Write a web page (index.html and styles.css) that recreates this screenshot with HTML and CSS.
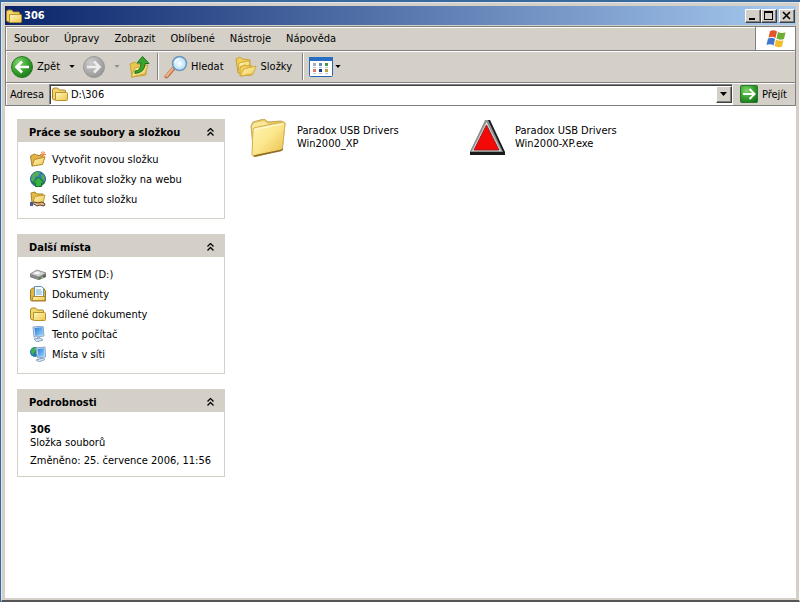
FILE: index.html
```html
<!DOCTYPE html>
<html lang="cs">
<head>
<meta charset="utf-8">
<title>306</title>
<link rel="stylesheet" href="styles.css">
</head>
<body>
<svg class="defs" aria-hidden="true">
  <defs>
    <linearGradient id="yellow" x1="0" y1="0" x2="1" y2="1"><stop offset="0" stop-color="#fff8c0"/><stop offset="1" stop-color="#edc64b"/></linearGradient>
    <radialGradient id="green" cx=".35" cy=".3" r=".8"><stop offset="0" stop-color="#83d86d"/><stop offset=".55" stop-color="#36a02e"/><stop offset="1" stop-color="#17731b"/></radialGradient>
    <radialGradient id="gray" cx=".35" cy=".3" r=".8"><stop offset="0" stop-color="#ccc"/><stop offset="1" stop-color="#929292"/></radialGradient>
    <radialGradient id="lens"><stop offset="0" stop-color="#fff"/><stop offset="1" stop-color="#a8dcf4"/></radialGradient>
    <linearGradient id="screen" x1="0" y1="0" x2="1" y2="1"><stop offset="0" stop-color="#2b78d8"/><stop offset="1" stop-color="#9ad8ff"/></linearGradient>
    <linearGradient id="bigfolder" x1="0" y1="0" x2="1" y2="1"><stop offset="0" stop-color="#fff6b4"/><stop offset=".5" stop-color="#fbe68c"/><stop offset="1" stop-color="#e9bc45"/></linearGradient>
    <symbol id="folder" viewBox="0 0 16 16">
      <path d="M.5 4q0-2 2-2h3l2 2h5q1 0 1 1v9H3q-2.500 0-2.500-2z" fill="#f2d56b" stroke="#a98420"/>
      <path d="M3.500 6.500h11q1 0 1 1v6q0 1-1 1h-10q-1 0-1-1z" fill="url(#yellow)" stroke="#b8912c"/>
    </symbol>
    <symbol id="chevrons" viewBox="0 0 7 8">
      <path d="M.5 3.500l3-3 3 3M.5 7.500l3-3 3 3" fill="none" stroke="#000" stroke-width="1.300"/>
    </symbol>
    <symbol id="down" viewBox="0 0 7 4"><path d="M0 0h7L3.500 4z" fill="currentColor"/></symbol>
  </defs>
</svg>
<div class="window">
  <header class="titlebar">
    <svg class="i16"><use href="#folder"/></svg>
    <h1>306</h1>
    <div class="caption">
      <button class="capbtn" aria-label="Minimalizovat"><svg viewBox="0 0 12 10"><path d="M2 7h6v2H2z"/></svg></button>
      <button class="capbtn" aria-label="Maximalizovat"><svg viewBox="0 0 12 10"><path d="M1 0h9v9H1zM2 2v6h7V2z" fill-rule="evenodd"/></svg></button>
      <button class="capbtn close" aria-label="Zavřít"><svg viewBox="0 0 12 10"><path d="M2 1l7 7M9 1L2 8" stroke="#000" stroke-width="1.600"/></svg></button>
    </div>
  </header>
  <div class="menurow">
    <nav class="menu">
      <button>Soubor</button><button>Úpravy</button><button>Zobrazit</button><button>Oblíbené</button><button>Nástroje</button><button>Nápověda</button>
    </nav>
    <div class="brand">
      <svg viewBox="0 0 20 18">
        <path d="M4 1q4-1.500 7 .5L9.500 8Q6 6 2.500 7.500z" fill="#e2562a"/>
        <path d="M12 2q3 1.500 7.500.5L18 9q-4 1.500-7.500-.5z" fill="#6fae35"/>
        <path d="M2 8.500q4-1.500 7 .5l-1.500 6.500q-3-2-7-.5z" fill="#3f76cf"/>
        <path d="M10 9.500q4 2 7.500.7L16 16.500q-4 1.500-7.500-.5z" fill="#f4bd2b"/>
      </svg>
    </div>
  </div>
  <div class="toolbar">
    <button class="tool back"><svg class="i22" viewBox="0 0 22 22"><circle cx="11" cy="11" r="10.500" fill="url(#green)" stroke="#2b7a2a"/><path d="M18 11H6M11 5.500L5.500 11l5.500 5.500" fill="none" stroke="#fff" stroke-width="2.600"/></svg><span>Zpět</span></button>
    <button class="drop" aria-label="Historie zpět"><svg class="arrow"><use href="#down"/></svg></button>
    <button class="tool fwd" aria-label="Vpřed" disabled><svg class="i22" viewBox="0 0 22 22"><circle cx="11" cy="11" r="10.500" fill="url(#gray)" stroke="#999"/><path d="M4 11h12M11 5.500l5.500 5.500-5.500 5.500" fill="none" stroke="#eee" stroke-width="2.600"/></svg></button>
    <button class="drop" aria-label="Historie vpřed" disabled><svg class="arrow"><use href="#down"/></svg></button>
    <button class="tool up" aria-label="Nahoru"><svg class="i22" viewBox="0 0 22 22"><path d="M1 8l5-2 2 2 9 1v10L3 21z" fill="#e8c650" stroke="#c9a437"/><path d="M2 21l4-9 13-3-3 9z" fill="url(#yellow)" stroke="#c9a437"/><path d="M6 15q6 0 6-8H8L13.500.5 20 7.500h-4q0 9-10 10z" fill="#39a62b" stroke="#1d731a"/></svg></button>
    <span class="sep"></span>
    <button class="tool search"><svg class="i24" viewBox="0 0 24 24"><path d="M9 14l-6.500 7.500" stroke="#b96c3c" stroke-width="4" stroke-linecap="round"/><path d="M8.500 14l-6 7" stroke="#eab088" stroke-width="2.500" stroke-linecap="round"/><circle cx="15.500" cy="8.500" r="7" fill="url(#lens)" stroke="#7195bd" stroke-width="1.500"/><path d="M11 8q1-4 5-4" fill="none" stroke="#fff" stroke-width="1.500"/></svg><span>Hledat</span></button>
    <button class="tool folders"><svg class="i22" viewBox="0 0 22 22"><path d="M1 3l4-2 2 2 8 1v9L3 17z" fill="#f1cf5a" stroke="#caa032"/><path d="M4 7l9-2 2 1-2 9-10 2z" fill="url(#yellow)" stroke="#d2ab3c"/><path d="M5 11l5-2 2 1h5v9l-12 1z" fill="#f1cf5a" stroke="#caa032"/><path d="M5 20l4-7 12-3-3 8z" fill="url(#yellow)" stroke="#d2ab3c"/></svg><span>Složky</span></button>
    <span class="sep"></span>
    <button class="tool views" aria-label="Zobrazení"><svg class="i24" viewBox="0 0 24 20"><rect x=".5" y=".5" width="23" height="19" rx="1" fill="#fff" stroke="#2266b5"/><path d="M0 0h24v4H0z" fill="#286fc4"/><path d="M4 6h3v3H4z" fill="#a2afbf"/><path d="M10 6h3v3h-3z" fill="#6585b8"/><path d="M16 6h3v3h-3z" fill="#3b9a4c"/><path d="M4 12h3v3H4z" fill="#df7762"/><path d="M10 12h3v3h-3z" fill="#173d86"/><path d="M16 12h3v3h-3z" fill="#b8a43a"/><path d="M4 10.500h3M10 10.500h3M16 10.500h3M4 16.500h3M10 16.500h3M16 16.500h3" stroke="#bbc7d6"/></svg><svg class="arrow"><use href="#down"/></svg></button>
  </div>
  <form class="address">
    <label for="addr">Adresa</label>
    <div class="combo">
      <svg class="i16"><use href="#folder"/></svg>
      <input id="addr" type="text" value="D:\306">
      <button type="button" class="combobtn" aria-label="Rozbalit"><svg class="arrow"><use href="#down"/></svg></button>
    </div>
    <button type="button" class="go"><svg class="i18" viewBox="0 0 18 18"><rect x=".5" y=".5" width="17" height="17" rx="1" fill="url(#green)" stroke="#28772a"/><path d="M3 9h11M9.500 4l5 5-5 5" fill="none" stroke="#fff" stroke-width="2"/></svg><span>Přejít</span></button>
  </form>
  <main class="content">
    <aside class="side">
      <section class="panel">
        <h2><span>Práce se soubory a složkou</span><button aria-label="Sbalit"><svg class="chev"><use href="#chevrons"/></svg></button></h2>
        <ul>
          <li><a href="#"><svg class="i16" viewBox="0 0 16 16"><path d="M.5 5l4-2 2 1 6 1v7L2 15z" fill="#e1b442" stroke="#a9822d"/><path d="M2 15l2.500-6.500L15 6l-2.500 7.500z" fill="url(#yellow)" stroke="#b38a2e"/><path d="M13 0v7M10 3.500h6M11 1l4 5M15 1l-4 5" stroke="#ee8b45"/></svg>Vytvořit novou složku</a></li>
          <li><a href="#"><svg class="i16" viewBox="0 0 16 16"><circle cx="8" cy="8" r="7.500" fill="#357fae" stroke="#276489"/><path d="M2 4q4-5 8-3L8 5 5 6l-1 5-3-2zM11 4l3 0 1 6-3-2z" fill="#55ac57"/><path d="M8.500 6l6 6h-3v3.500h-6V12h-3z" fill="#39b240" stroke="#16732a"/></svg>Publikovat složky na webu</a></li>
          <li><a href="#"><svg class="i16" viewBox="0 0 16 16"><path d="M1 2l4-1 2 2h6v9H2z" fill="#e5bb47" stroke="#a9822d"/><path d="M2.500 12L5 5.500 15 4l-2 8z" fill="url(#yellow)" stroke="#c49b38"/><path d="M0 12l4-1 4 1 4-1 3 2-1 2-4-1-3 1-3-2H0z" fill="#e8b78a" stroke="#55422b"/><path d="M0 11h3v4H0z" fill="#465d91"/></svg>Sdílet tuto složku</a></li>
        </ul>
      </section>
      <section class="panel">
        <h2><span>Další místa</span><button aria-label="Sbalit"><svg class="chev"><use href="#chevrons"/></svg></button></h2>
        <ul>
          <li><a href="#"><svg class="i16" viewBox="0 0 16 16"><path d="M0 8l7-4 9 3v4l-7 3-9-3z" fill="#666"/><path d="M0 8l7-4 9 3-7 4z" fill="#d0d0d0" stroke="#999"/><path d="M0 8.500l9 3v2.500l-9-3z" fill="#888"/><ellipse cx="7" cy="7" rx="3" ry="1.200" fill="#f5f5f5"/><path d="M11 12l2-1" stroke="#7bce63" stroke-width="1.500"/></svg>SYSTEM (D:)</a></li>
          <li><a href="#"><svg class="i16" viewBox="0 0 16 16"><path d="M.5 4l2-2h11l2 3v10H2q-1.500 0-1.500-1.500z" fill="#e2b643" stroke="#9b7b29"/><path d="M4.500.5h7l2 2v9h-9z" fill="#f5fbff" stroke="#5f91ba"/><path d="M6 4h5M6 6h6M6 8h6" stroke="#76acd3"/><path d="M3 10.500h12v4H2z" fill="url(#yellow)" stroke="#b38a2e"/></svg>Dokumenty</a></li>
          <li><a href="#"><svg class="i16"><use href="#folder"/></svg>Sdílené dokumenty</a></li>
          <li><a href="#"><svg class="i16" viewBox="0 0 16 16"><path d="M3 1l10-1 1 10-10 1z" fill="#d7e6f5" stroke="#86a5c8"/><path d="M4.500 2l8-1 .7 8-8 1z" fill="url(#screen)"/><path d="M7 10h3v3H7z" fill="#a3b9d3"/><path d="M4 13l6-1 3 2-6 2z" fill="#d5e1ef" stroke="#88a6c3"/></svg>Tento počítač</a></li>
          <li><a href="#"><svg class="i16" viewBox="0 0 16 16"><circle cx="5" cy="6" r="5" fill="#2878ab"/><path d="M1 4q3-4 6-2L5 6l-3 3zM6 7l3 1-2 3z" fill="#43ae52"/><path d="M6 2l9-1 .5 10-8 1z" fill="#d7e6f5" stroke="#86a5c8"/><path d="M7.500 3l6.500-.8.5 7.800-6 1z" fill="url(#screen)"/><path d="M10 11h3v2h-3z" fill="#91abc9"/><path d="M6 14l7-2 2 1.500L9 16z" fill="#d5e1ef" stroke="#88a6c3"/></svg>Místa v síti</a></li>
        </ul>
      </section>
      <section class="panel details">
        <h2><span>Podrobnosti</span><button aria-label="Sbalit"><svg class="chev"><use href="#chevrons"/></svg></button></h2>
        <div class="info">
          <strong>306</strong>
          <p>Složka souborů</p>
          <p class="changed">Změněno: 25. července 2006, 11:56</p>
        </div>
      </section>
    </aside>
    <div class="files">
      <a class="file" href="#"><svg viewBox="0 0 38 38"><path d="M2 7l2-4 11-3 4 3 13-1 4 2-3 27-28 7z" fill="#e7c761" stroke="#c6a454"/><path d="M3 7l2-3 10-2 4 3 15-1-3 24-27 7z" fill="#f9e799"/><path d="M4 11q0-2 2-2.400L34 3q2 0 2 2l-2.500 24q0 1.500-2 2L5 37q-2 0-2-2z" fill="url(#bigfolder)" stroke="#d4ae50"/><path d="M5 37l27-5.500q1.500-.5 1.500-2" fill="none" stroke="#8b6c26" stroke-width="1.300"/><path d="M5.500 12q0-1.500 2-2l26-5" fill="none" stroke="#fffbdc"/></svg><span>Paradox USB Drivers<br>Win2000_XP</span></a>
      <a class="file exe" href="#"><svg viewBox="0 0 36 38"><path d="M17 1h4l15 32v3H1v-3z" fill="#171b1b"/><path d="M16 1h3l15 32H1z" fill="#8d9292"/><path d="M17.500 3L32 32H3z" fill="#dedede"/><path d="M17.500 6L30 31H5z" fill="#f40909" stroke="#9d1b1b"/></svg><span>Paradox USB Drivers<br>Win2000-XP.exe</span></a>
    </div>
  </main>
</div>
</body>
</html>
```
FILE: styles.css
```css
* { box-sizing: border-box; }

body {
  margin: 0;
  height: 100vh;
  padding: 2px 0 0 1px;
  background: #3a6a9c;
  color: #000;
  font: 11px/13px Tahoma, "DejaVu Sans Condensed", "DejaVu Sans", sans-serif;
}

svg { display: block; flex: none; }
.defs { position: absolute; width: 0; height: 0; }
.i16 { width: 16px; height: 16px; }
.i18 { width: 18px; height: 18px; }
.i22 { width: 22px; height: 22px; }
.i24 { width: 24px; height: 24px; }
.arrow { width: 7px; height: 4px; }
.drop .arrow, .views .arrow { width: 6px; height: 3px; }

button {
  display: flex;
  align-items: center;
  margin: 0;
  padding: 0;
  border: 0;
  background: none;
  color: inherit;
  font: inherit;
}
a { color: inherit; text-decoration: none; }
h1, h2, p, ul { margin: 0; padding: 0; font-size: inherit; }

.window {
  display: flex;
  flex-direction: column;
  height: 100%;
  padding: 2px;
  background: #d4d0c8;
  border: 1px solid #dce6f2;
  border-right-color: #fff;
  border-bottom: 2px solid #555;
}

.titlebar {
  display: flex;
  align-items: center;
  flex: none;
  height: 19px;
  margin: 1px 1px 0;
  padding: 0 1px;
  gap: 2px;
  background: linear-gradient(90deg, #0a246a, #a6caf0);
  color: #fff;
}
.titlebar h1 { flex: 1; font-weight: bold; }
.caption { display: flex; }
.capbtn {
  justify-content: center;
  width: 16px;
  height: 14px;
  background: #d4d0c8;
  border: 1px solid #404040;
  border-top-color: #fff;
  border-left-color: #fff;
  box-shadow: inset -1px -1px #808080;
}
.capbtn svg { width: 12px; height: 10px; }
.close { margin-left: 2px; }

.menurow, .toolbar, .address {
  display: flex;
  flex: none;
  border: 1px solid #808080;
  border-bottom-width: 0;
  box-shadow: inset 1px 1px #fff;
  margin: 0 1px;
}
.menurow { height: 24px; margin-top: 1px; }
.menu { display: flex; flex: 1; align-items: center; gap: 15px; padding-left: 8px; }
.brand {
  display: flex;
  align-items: center;
  justify-content: center;
  width: 40px;
  background: #fff;
  border-left: 1px solid #808080;
}
.brand svg { width: 20px; height: 18px; }

.toolbar { align-items: center; height: 32px; padding-left: 5px; }
.tool { gap: 4px; }
.drop { justify-content: center; width: 23px; height: 22px; }
.drop:disabled { color: #909090; }
.up { margin-left: 1px; }
.sep {
  width: 2px;
  height: 27px;
  margin: 0 5px 0 6px;
  border-left: 1px solid #808080;
  border-right: 1px solid #fff;
}
.search { gap: 3px; }
.folders { margin-left: 11px; }
.folders + .sep { margin-left: 10px; }
.views svg:first-child { height: 20px; }
.views { gap: 2px; }

.address {
  align-items: center;
  height: 24px;
  padding: 0 8px 0 4px;
  border-bottom-width: 1px;
}
.combo {
  display: flex;
  align-items: center;
  flex: 1;
  height: 21px;
  margin-left: 5px;
  padding-left: 1px;
  background: #fff;
  border: 1px solid #808080;
  border-right-color: #fff;
  border-bottom-color: #fff;
  box-shadow: inset 1px 1px #404040;
}
.combo .i16 { margin-left: 1px; }
.combo input {
  flex: 1;
  min-width: 0;
  padding: 0 3px;
  border: 0;
  outline: 0;
  background: none;
  color: inherit;
  font: inherit;
}
.combobtn {
  justify-content: center;
  width: 16px;
  height: 17px;
  background: #d4d0c8;
  border: 1px solid #404040;
  border-top-color: #fff;
  border-left-color: #fff;
  box-shadow: inset -1px -1px #808080;
}
.go { gap: 4px; margin-left: 7px; }

.content {
  display: flex;
  flex: 1;
  min-height: 0;
  margin: 0 1px;
  padding: 13px 12px;
  background: #fff;
}
.side { display: flex; flex-direction: column; gap: 15px; width: 208px; }
.panel { border: 1px solid #d4d0c8; }
.panel h2 {
  display: flex;
  align-items: center;
  justify-content: space-between;
  height: 22px;
  padding: 2px 10px 0 11px;
  background: #d4d0c8;
}
.chev { width: 7px; height: 8px; }
.panel ul { padding: 7px 12px 9px; list-style: none; }
.panel li a { display: flex; align-items: center; gap: 6px; height: 20px; }
.info { padding: 11px 12px 9px; }
.info strong { display: block; }
.changed { margin-top: 5px; }

.files {
  display: flex;
  flex-wrap: wrap;
  flex: 1;
  align-items: flex-start;
  padding-left: 24px;
}
.file { display: flex; gap: 10px; width: 220px; }
.file svg { width: 38px; height: 38px; }
.exe svg { width: 36px; }
.file span { padding-top: 5px; }
```
